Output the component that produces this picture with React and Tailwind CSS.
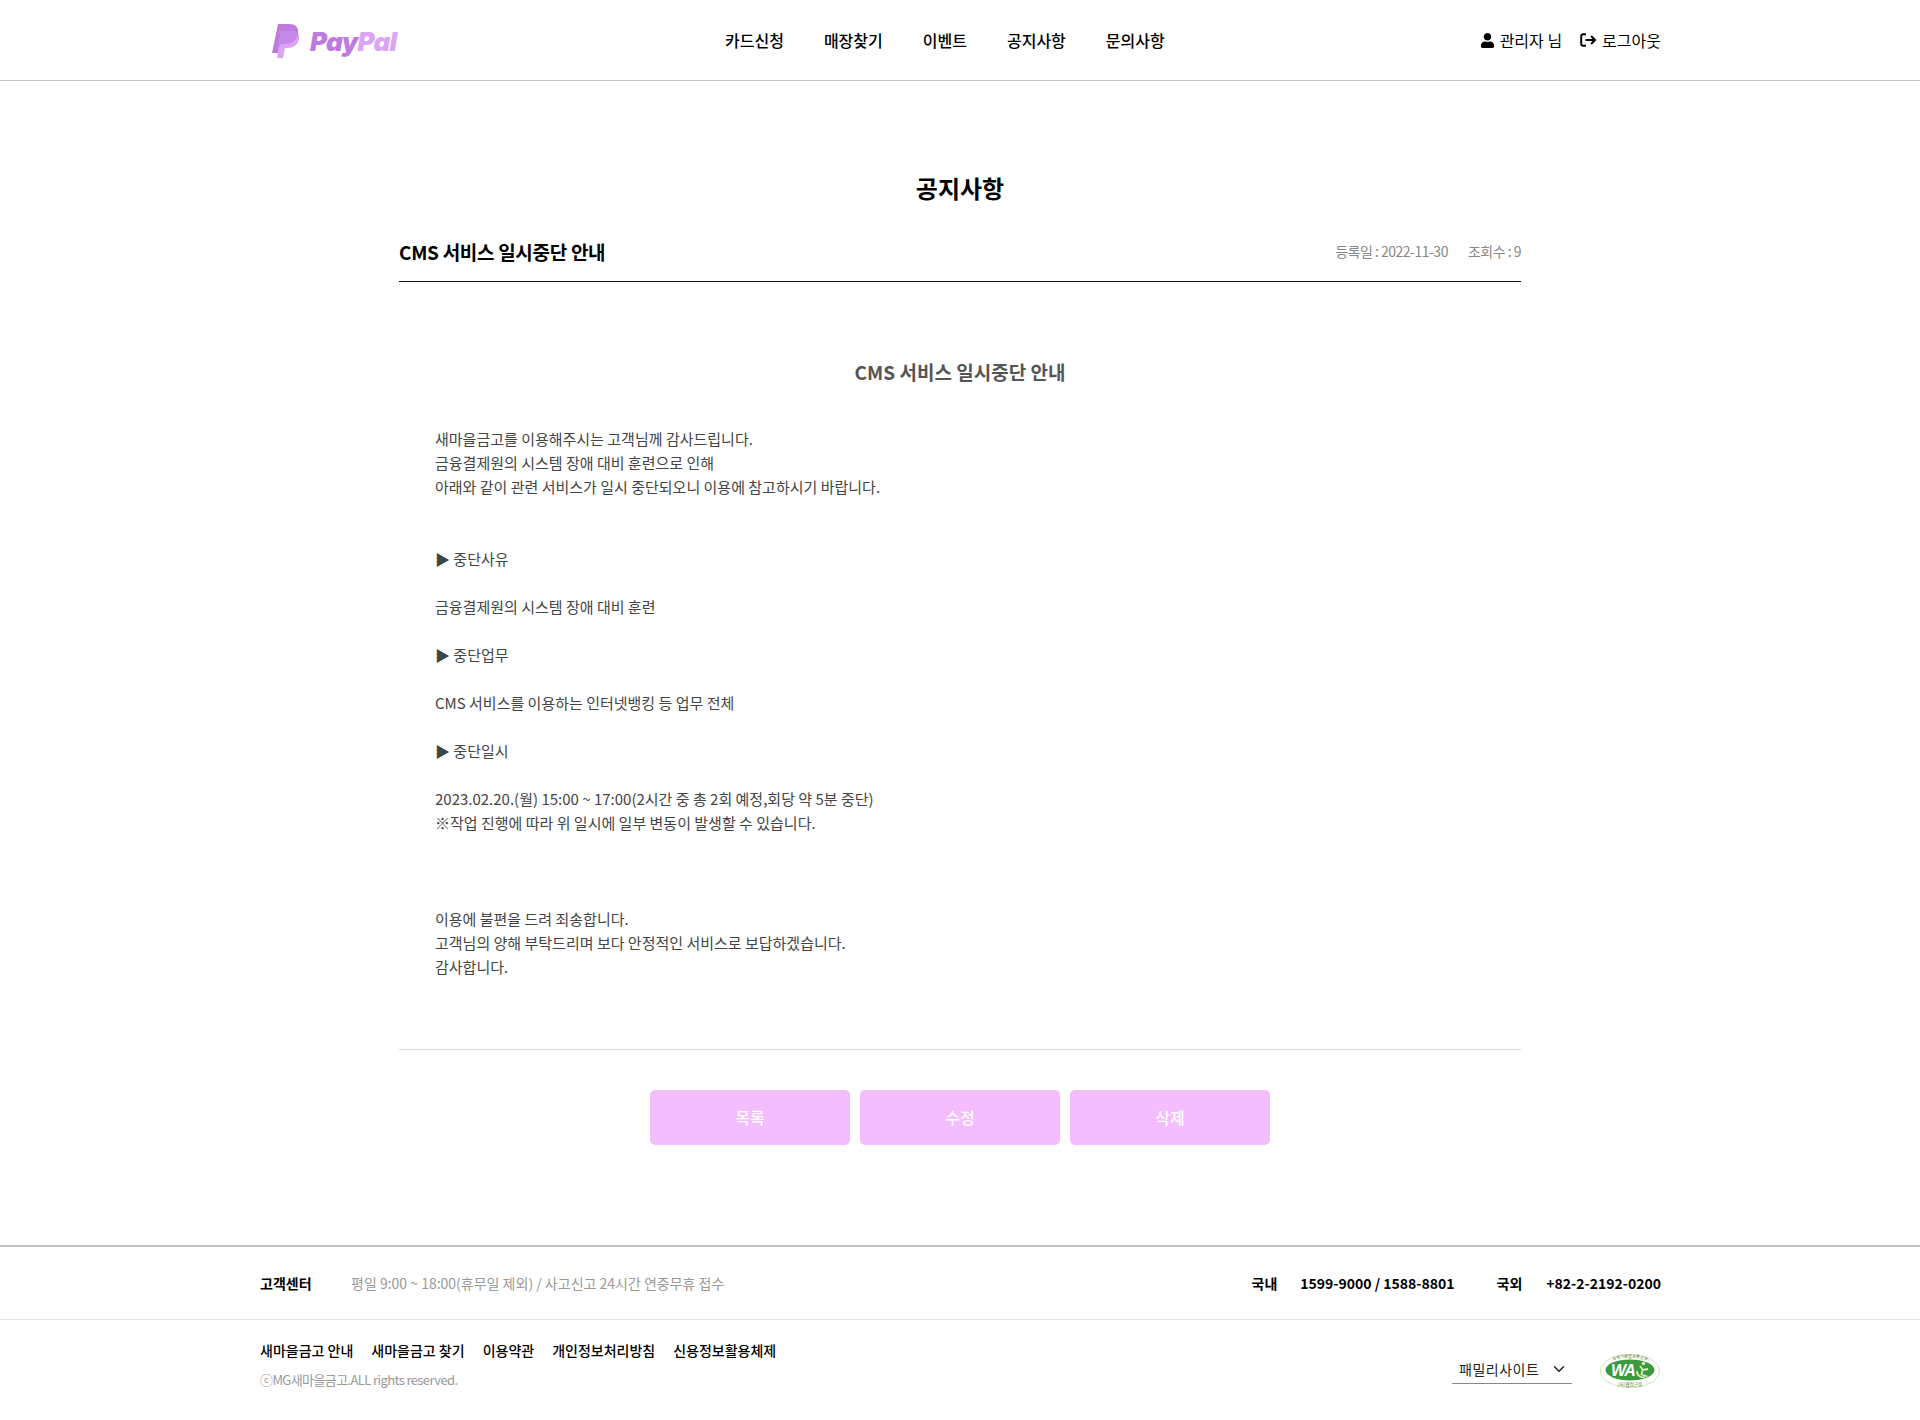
import React from "react";
import { FaUser } from "react-icons/fa";
import { FiChevronDown } from "react-icons/fi";

const NAV = ["카드신청", "매장찾기", "이벤트", "공지사항", "문의사항"];
const FOOT_LINKS = ["새마을금고 안내", "새마을금고 찾기", "이용약관", "개인정보처리방침", "신용정보활용체제"];

const LINES = [
  "새마을금고를 이용해주시는 고객님께 감사드립니다.",
  "금융결제원의 시스템 장애 대비 훈련으로 인해",
  "아래와 같이 관련 서비스가 일시 중단되오니 이용에 참고하시기 바랍니다.",
  "",
  "",
  "▶ 중단사유",
  "",
  "금융결제원의 시스템 장애 대비 훈련",
  "",
  "▶ 중단업무",
  "",
  "CMS 서비스를 이용하는 인터넷뱅킹 등 업무 전체",
  "",
  "▶ 중단일시",
  "",
  "2023.02.20.(월) 15:00 ~ 17:00(2시간 중 총 2회 예정,회당 약 5분 중단)",
  "※작업 진행에 따라 위 일시에 일부 변동이 발생할 수 있습니다.",
  "",
  "",
  "",
  "이용에 불편을 드려 죄송합니다.",
  "고객님의 양해 부탁드리며 보다 안정적인 서비스로 보답하겠습니다.",
  "감사합니다.",
];

function Logo() {
  return (
    <div className="flex items-center pt-[2px]">
      <svg width="28" height="34" viewBox="0 0 28 34" className="shrink-0">
        <path d="M6 0h11c7 0 10 4 9 9-1 7-6 11-13 11H9l-2 9H0z" fill="#bd7be0" />
        <path d="M9 7h11c5 0 8 3 7 8-1 6-6 9-11 9h-3l-2 10H5z" fill="#dba5f5" />
        <path d="M9 7h11c3 0 5 1 6 2-1 7-6 11-13 11H9l-2 4H5.5z" fill="#c688e8" />
      </svg>
      <span className="ml-[10px] mt-[2px] font-['Inter',sans-serif] text-[26px] font-black italic leading-none tracking-[-0.7px]">
        <span className="text-[#bd7be0]">Pay</span>
        <span className="text-[#dba5f5]">Pal</span>
      </span>
    </div>
  );
}

function LogoutIcon() {
  return (
    <svg width="17" height="14" viewBox="0 0 17 14" fill="none" stroke="#000" strokeWidth="2" className="ml-[18px] mr-[5px] shrink-0">
      <path d="M6 1.2H3.2A2 2 0 0 0 1.2 3.2v7.6a2 2 0 0 0 2 2H6" />
      <path d="M5.5 7h9M11 3l4 4-4 4" />
    </svg>
  );
}

function WaMark() {
  return (
    <svg width="62" height="36" viewBox="0 0 62 36" className="shrink-0">
      <ellipse cx="31" cy="18" rx="29.5" ry="16.5" fill="#fff" stroke="#cfe6b4" strokeWidth="1" />
      <defs>
        <path id="wa-arc" d="M8 13 A25 14 0 0 1 54 13" />
      </defs>
      <text fontFamily="Noto Sans CJK KR, sans-serif" fontSize="4.2" fill="#3a7a3e">
        <textPath href="#wa-arc" startOffset="50%" textAnchor="middle">
          과학기술정보통신부
        </textPath>
      </text>
      <ellipse cx="31" cy="17" rx="24.5" ry="10.5" fill="#3a9a3e" />
      <text x="12" y="23" fontFamily="Liberation Sans, sans-serif" fontSize="16" fontWeight="700" fontStyle="italic" letterSpacing="-1" fill="#fff">
        WA
      </text>
      <circle cx="44.5" cy="10.5" r="1.8" fill="#d8efb4" />
      <path d="M41 13l3 4 5-1M43.5 17l-1 4.5 6 2M38 18a6 6 0 0 0 8 6" fill="none" stroke="#d8efb4" strokeWidth="1.8" />
      <text x="31" y="33" textAnchor="middle" fontFamily="Noto Sans CJK KR, sans-serif" fontSize="4.6" fill="#3a7a3e">
        (사)웹접근성
      </text>
    </svg>
  );
}

export default function App() {
  return (
    <div className="min-h-[1420px] bg-white font-['Noto_Sans_CJK_KR',sans-serif] text-black">
      {/* header */}
      <header className="h-[81px] border-b border-[#c4c4c4]">
        <div className="mx-auto flex h-[80px] w-[1400px] items-center">
          <div className="w-[465px] pl-[12px]">
            <Logo />
          </div>
          <nav className="flex gap-[40px] text-[16px] font-medium">
            {NAV.map((n) => (
              <a key={n}>{n}</a>
            ))}
          </nav>
          <div className="ml-auto -mr-[1px] flex items-center text-[16px]">
            <FaUser className="mr-[5px] text-[15px]" />
            <span>관리자 님</span>
            <LogoutIcon />
            <span>로그아웃</span>
          </div>
        </div>
      </header>

      {/* notice */}
      <main className="mx-auto w-[1122px]">
        <h1 className="pt-[89px] text-center text-[24px] font-bold leading-[36px]">공지사항</h1>
        <div className="mt-[31px] flex h-[45px] items-start justify-between border-b border-[#111]">
          <h2 className="text-[19px] font-bold leading-[30px] tracking-[-0.3px]">CMS 서비스 일시중단 안내</h2>
          <div className="flex gap-[20px] pt-[4px] text-[14px] leading-[20px] tracking-[-0.5px] text-[#888]">
            <span>등록일 : 2022-11-30</span>
            <span>조회수 : 9</span>
          </div>
        </div>

        <h3 className="mt-[75px] text-center text-[19px] font-bold leading-[30px] text-[#555]">
          CMS 서비스 일시중단 안내
        </h3>
        <div className="mt-[40px] border-b border-[#d8d8d8] px-[36px] pb-[70px] text-[15px] leading-[24px] text-[#444]">
          {LINES.map((l, i) => (
            <p key={i} className="h-[24px]">
              {l}
            </p>
          ))}
        </div>

        <div className="mt-[40px] flex justify-center gap-[10px]">
          {["목록", "수정", "삭제"].map((b) => (
            <button key={b} className="h-[55px] w-[200px] rounded-[5px] bg-[#f4bdfd] pb-[2px] text-[16px] font-medium text-white">
              {b}
            </button>
          ))}
        </div>
      </main>

      {/* footer */}
      <footer className="mt-[100px] border-t-2 border-[#c4c4c4]">
        <div className="border-b border-[#e4e4e4]">
          <div className="mx-auto flex h-[72px] w-[1400px] items-center text-[14px]">
            <strong className="w-[91px] font-bold">고객센터</strong>
            <span className="text-[#999]">평일 9:00 ~ 18:00(휴무일 제외) / 사고신고 24시간 연중무휴 접수</span>
            <div className="ml-auto -mr-[1px] flex items-center font-bold">
              <span>국내</span>
              <span className="ml-[23px]">1599-9000 / 1588-8801</span>
              <span className="ml-[42px]">국외</span>
              <span className="ml-[24px]">+82-2-2192-0200</span>
            </div>
          </div>
        </div>
        <div className="mx-auto flex h-[100px] w-[1400px] items-start justify-between">
          <div>
            <ul className="mt-[19px] flex gap-[18px] text-[14px] font-medium leading-[22px]">
              {FOOT_LINKS.map((l) => (
                <li key={l}>{l}</li>
              ))}
            </ul>
            <p className="mt-[9px] text-[13px] leading-[20px] tracking-[-0.6px] text-[#999]">
              ⓒMG새마을금고.ALL rights reserved.
            </p>
          </div>
          <div className="mt-[32px] flex items-center">
            <div className="mb-[5px] flex h-[32px] w-[120px] items-center border-b border-[#888] pl-[7px] pt-[3px] text-[14px] tracking-[0.5px] text-[#222]">
              패밀리사이트
              <FiChevronDown className="ml-auto mr-[4px] text-[18px]" />
            </div>
            <div className="ml-[27px] -mr-[1px]">
              <WaMark />
            </div>
          </div>
        </div>
      </footer>
    </div>
  );
}
